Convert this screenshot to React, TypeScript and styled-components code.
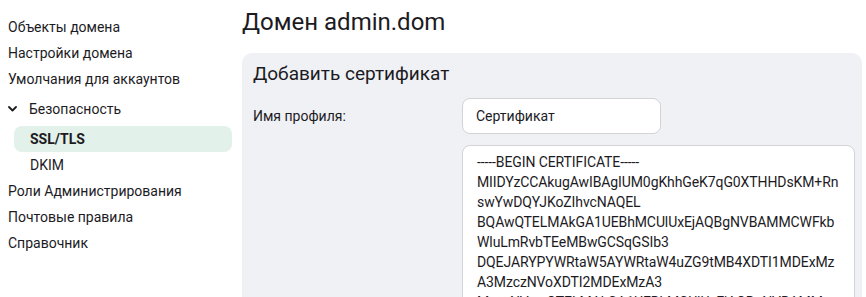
import React from "react";
import styled, { createGlobalStyle } from "styled-components";

const GlobalStyle = createGlobalStyle`
  html, body {
    margin: 0;
    padding: 0;
    overflow: hidden;
    background: #ffffff;
  }
  body {
    font-family: Roboto, "Liberation Sans", sans-serif;
    color: #1c1b1f;
  }
`;

const Page = styled.div`
  display: flex;
  align-items: flex-start;
  height: 297px;
`;

const Sidebar = styled.nav`
  width: 232px;
  flex-shrink: 0;
  box-sizing: border-box;
  padding: 14px 0 0 8px;
  display: flex;
  flex-direction: column;
`;

const NavItem = styled.div<{ $sub?: boolean; $active?: boolean }>`
  height: 26px;
  display: flex;
  align-items: center;
  font-size: 14px;
  margin-left: ${(p) => (p.$sub ? "6px" : "0")};
  padding-left: ${(p) => (p.$sub ? "16px" : "0")};
  border-radius: 8px;
  font-weight: ${(p) => (p.$active ? 700 : 400)};
  background: ${(p) => (p.$active ? "#e2f1ea" : "transparent")};
`;

const GroupHeader = styled.div`
  height: 26px;
  margin: 4px 0;
  display: flex;
  align-items: center;
  gap: 12px;
  font-size: 14px;
`;

const Chevron = () => (
  <svg width="9" height="6" viewBox="0 0 9 6" style={{ marginTop: -1 }}>
    <polyline points="1,1 4.5,4.5 8,1" fill="none" stroke="#1c1b1f" strokeWidth="1.8" strokeLinecap="round" strokeLinejoin="round" />
  </svg>
);

const Main = styled.main`
  flex: 1;
  margin-left: 10px;
  padding: 8px 4px 0 0;
  min-width: 0;
`;

const Title = styled.h1`
  margin: 0 0 16px;
  font-size: 24px;
  line-height: 29px;
  font-weight: 400;
`;

const Card = styled.section`
  background: #f0f1f5;
  border-radius: 10px;
  padding: 9px 7px 20px 11px;
`;

const CardTitle = styled.h2`
  margin: 0 0 12px;
  font-size: 19px;
  line-height: 24px;
  font-weight: 400;
`;

const Form = styled.div`
  display: grid;
  grid-template-columns: 209px 1fr;
  row-gap: 11px;
  align-items: start;
`;

const Label = styled.label`
  font-size: 14px;
  height: 36px;
  display: flex;
  align-items: center;
`;

const TextInput = styled.input`
  box-sizing: border-box;
  width: 199px;
  height: 36px;
  border: 1px solid #d3d3d6;
  border-radius: 8px;
  background: #fff;
  padding: 0 13px;
  font: inherit;
  font-size: 14px;
  color: #1c1b1f;
  outline: none;
`;

const CertArea = styled.textarea`
  box-sizing: border-box;
  width: 100%;
  height: 240px;
  border: 1px solid #d3d3d6;
  border-radius: 8px;
  background: #fff;
  padding: 6px 14px;
  font-family: Roboto, "Liberation Sans", sans-serif;
  font-size: 14px;
  line-height: 20px;
  letter-spacing: -0.1px;
  color: #1c1b1f;
  resize: none;
  overflow: hidden;
  white-space: pre;
  outline: none;
`;

const certLines = [
  "-----BEGIN CERTIFICATE-----",
  "MIIDYzCCAkugAwIBAgIUM0gKhhGeK7qG0XTHHDsKM+Rn",
  "swYwDQYJKoZIhvcNAQEL",
  "BQAwQTELMAkGA1UEBhMCUlUxEjAQBgNVBAMMCWFkb",
  "WluLmRvbTEeMBwGCSqGSIb3",
  "DQEJARYPYWRtaW5AYWRtaW4uZG9tMB4XDTI1MDExMz",
  "A3MzczNVoXDTI2MDExMzA3",
  "MzczNVowQTELMAkGA1UEBhMCUlUxEjAQBgNVBAMM",
];

export default function App() {
  return (
    <>
      <GlobalStyle />
      <Page>
        <Sidebar>
          <NavItem>Объекты домена</NavItem>
          <NavItem>Настройки домена</NavItem>
          <NavItem>Умолчания для аккаунтов</NavItem>
          <GroupHeader>
            <Chevron />
            Безопасность
          </GroupHeader>
          <NavItem $sub $active>SSL/TLS</NavItem>
          <NavItem $sub>DKIM</NavItem>
          <NavItem>Роли Администрирования</NavItem>
          <NavItem>Почтовые правила</NavItem>
          <NavItem>Справочник</NavItem>
        </Sidebar>
        <Main>
          <Title>Домен admin.dom</Title>
          <Card>
            <CardTitle>Добавить сертификат</CardTitle>
            <Form>
              <Label>Имя профиля:</Label>
              <TextInput defaultValue="Сертификат" />
              <div />
              <CertArea readOnly value={certLines.join("\n")} />
            </Form>
          </Card>
        </Main>
      </Page>
    </>
  );
}
